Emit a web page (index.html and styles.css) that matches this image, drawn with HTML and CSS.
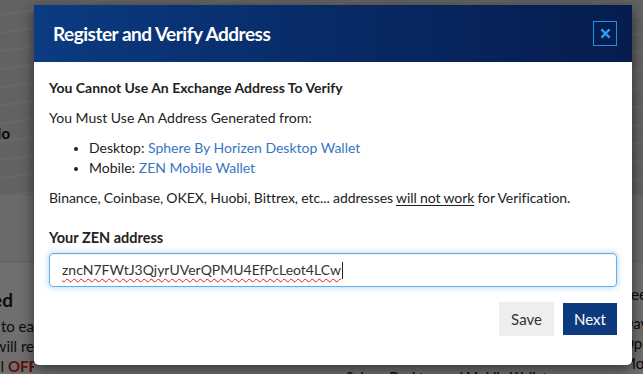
FILE: index.html
```html
<!DOCTYPE html>
<html lang="en">
<head>
<meta charset="utf-8">
<title>Register and Verify Address</title>
<link rel="stylesheet" href="styles.css">
</head>
<body>
<div class="page">
  <section class="hero">
    <div class="hero-left"><span class="hero-word">Portfolio</span></div>
  </section>
  <section class="band"></section>
  <section class="content">
    <div class="col-left">
      <div class="line heading">Get Verified</div>
      <div class="line">Want to ea</div>
      <div class="line">You will re</div>
      <div class="line off-line">optional <span class="off">OFF</span></div>
    </div>
    <div class="col-mid">
      <div class="mid-line">Sphere Desktop and Mobile Wallet</div>
    </div>
    <div class="col-right">
      <div class="line r-head">Seen</div>
      <div class="line">Days</div>
      <div class="line">Open</div>
      <div class="line">More</div>
    </div>
  </section>
</div>
<div class="overlay"></div>
<div class="modal" role="dialog" aria-labelledby="modal-title">
  <div class="modal-header">
    <h4 class="modal-title" id="modal-title">Register and Verify Address</h4>
    <button class="close" type="button" aria-label="Close">
      <svg viewBox="0 0 12 12" width="11" height="11"><path d="M1.5 1.5 L10.5 10.5 M10.5 1.5 L1.5 10.5" stroke="currentColor" stroke-width="2.6" stroke-linecap="butt"/></svg>
    </button>
  </div>
  <div class="modal-body">
    <p class="strong">You Cannot Use An Exchange Address To Verify</p>
    <p>You Must Use An Address Generated from:</p>
    <ul class="list">
      <li>Desktop: <a href="#">Sphere By Horizen Desktop Wallet</a></li>
      <li>Mobile: <a href="#">ZEN Mobile Wallet</a></li>
    </ul>
    <p class="tight">Binance, Coinbase, OKEX, Huobi, Bittrex, etc... addresses <u>will not work</u> for Verification.</p>
    <label class="label">Your ZEN address</label>
    <div class="input"><span class="typed">zncN7FWtJ3QjyrUVerQPMU4EfPcLeot4LCw</span><span class="caret"></span></div>
  </div>
  <div class="modal-footer">
    <button class="btn btn-save" type="button">Save</button>
    <button class="btn btn-next" type="button">Next</button>
  </div>
</div>
</body>
</html>
```

FILE: styles.css
```css
* { box-sizing: border-box; }
html, body { margin: 0; padding: 0; }
body {
  width: 643px;
  height: 374px;
  overflow: hidden;
  position: relative;
  font-family: Lato, "Open Sans", "Liberation Sans", sans-serif;
  color: #222;
  background: #f2f2f2;
}
.page { width: 643px; }
.hero {
  height: 195px;
  background-color: #d9d9d9;
  background-image: repeating-linear-gradient(-8deg, rgba(255,255,255,0) 0px, rgba(255,255,255,0) 14px, rgba(255,255,255,0.35) 16px, rgba(255,255,255,0) 18px);
}
.hero-left {
  display: flex;
  justify-content: flex-end;
  width: 10px;
  padding-top: 124px;
  overflow: hidden;
}
.hero-word { font-size: 15px; font-weight: 700; white-space: nowrap; color: #111; }
.band { height: 67px; background: #ececec; border-bottom: 1px solid #d6d6d6; }
.content {
  display: flex;
  background: #f6f6f6;
  height: 120px;
}
.col-left {
  width: 34px;
  flex: none;
  display: flex;
  flex-direction: column;
  align-items: flex-end;
  overflow: hidden;
  padding-top: 26px;
}
.line { white-space: nowrap; font-size: 15px; line-height: 20px; color: #1a1a1a; }
.col-left .line { margin-right: 0; }
.col-left .heading { font-size: 19px; font-weight: 700; line-height: 24px; margin-bottom: 4px; margin-right: 21px; }
.col-left .off-line { margin-right: -3px; }
.off { color: #d42020; font-weight: 700; }
.col-mid { flex: 1; min-width: 0; overflow: hidden; padding-top: 107px; padding-left: 312px; }
.mid-line { font-size: 13px; line-height: 16px; color: #1b2a4a; font-weight: 700; white-space: nowrap; }
.col-right {
  width: 11px;
  flex: none;
  overflow: hidden;
  padding-top: 22px;
  display: flex;
  flex-direction: column;
  align-items: flex-start;
}
.col-right .line { margin-left: -10px; }
.col-right .r-head { font-size: 16px; margin-bottom: 9px; }
.overlay {
  position: absolute;
  inset: 0;
  background: rgba(0, 0, 0, 0.55);
}
.modal {
  position: absolute;
  left: 34px;
  top: 5px;
  width: 598px;
  height: 360px;
  background: #fff;
  border-radius: 0 0 5px 5px;
  box-shadow: 0 4px 14px rgba(0, 0, 0, 0.55);
  display: flex;
  flex-direction: column;
}
.modal-header {
  height: 57px;
  background: linear-gradient(90deg, #0b3b82 0%, #082a66 50%, #061c4e 100%);
  display: flex;
  align-items: center;
  justify-content: space-between;
  padding: 0 15px 0 19px;
}
.modal-title {
  margin: 0 0 1px 0;
  color: #fff;
  font-size: 19px;
  font-weight: 700;
  letter-spacing: -0.5px;
}
.close {
  width: 24px;
  height: 25px;
  border: 1px solid #1f8fe6;
  background: transparent;
  color: #2aa0f5;
  padding: 0;
  display: flex;
  align-items: center;
  justify-content: center;
  margin-top: -1px;
}
.close svg { display: block; }
.modal-body {
  padding: 16px 15px 0 15px;
  font-size: 14px;
  line-height: 20px;
  color: #222;
}
.modal-body p { margin: 0 0 10px 0; }
.modal-body p.tight { letter-spacing: -0.05px; word-spacing: -0.3px; }
.strong { font-weight: 700; }
.list { margin: 0 0 10px 0; padding: 0 0 0 40px; }
.list li { line-height: 20px; }
.list li::marker { font-size: 12px; }
.list a { color: #3677c4; text-decoration: none; }
.modal-body u { text-decoration: underline; text-underline-offset: 2px; }
.label {
  display: block;
  font-weight: 700;
  font-size: 14.5px;
  margin-top: 20px;
  line-height: 20px;
  margin-bottom: 5px;
}
.input {
  height: 34px;
  border: 1px solid #66afe9;
  border-radius: 4px;
  box-shadow: inset 0 1px 1px rgba(0,0,0,.075), 0 0 6px rgba(102,175,233,.6);
  display: flex;
  align-items: center;
  padding-left: 12px;
  font-size: 14px;
  color: #333;
}
.typed {
  text-decoration: underline wavy #e02020;
  text-decoration-thickness: 1px;
  text-underline-offset: 3px;
}
.caret { width: 1px; height: 17px; background: #222; margin-left: 1px; }
.modal-footer {
  display: flex;
  justify-content: flex-end;
  align-items: center;
  gap: 9px;
  padding: 15px 15px 0 15px;
}
.btn {
  font-family: inherit;
  font-size: 15px;
  border: none;
  padding: 0;
  cursor: pointer;
}
.btn-save { width: 55px; height: 34px; background: #eeeeee; color: #333; }
.btn-next { width: 54px; height: 32px; background: #0d3a7c; color: #fff; }
```
